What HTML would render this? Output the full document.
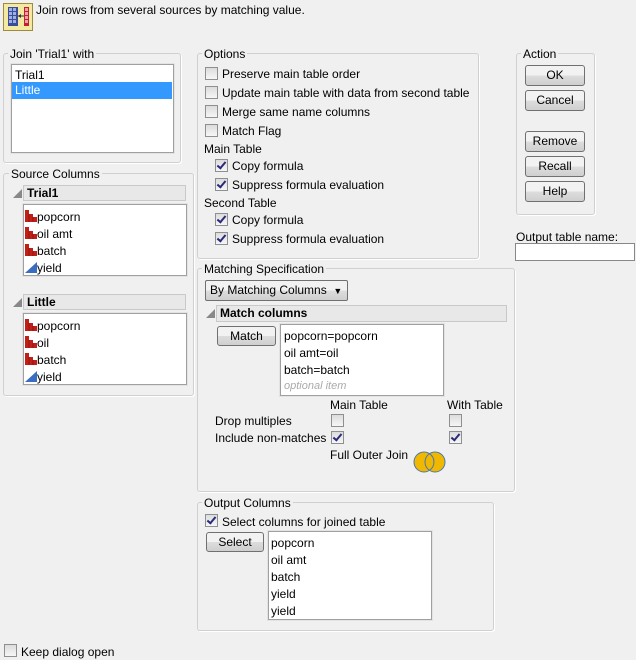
<!DOCTYPE html><html><head><style>
body{margin:0;width:636px;height:660px;background:#f0f0f0;font-family:"Liberation Sans",sans-serif;font-size:12px;color:#000;position:relative;overflow:hidden}
.a{position:absolute;white-space:nowrap}
.g{position:absolute;border:1px solid #d0d0d0;border-radius:3px;box-shadow:1px 1px 0 #fff}
.gl{position:absolute;background:#f0f0f0;padding:0 2px;white-space:nowrap}
.lb{position:absolute;background:#fff;border:1px solid #a0a0a0;box-shadow:0 0 0 1px #e3e3e3}
.cb{position:absolute;width:11px;height:11px;border:1px solid #8e8f8f;background:linear-gradient(#dcdcdc,#f6f6f6);box-sizing:content-box}
.cb.k::after{content:"";position:absolute;left:3px;top:0px;width:3px;height:7px;border:solid #2a2a7a;border-width:0 2px 2px 0;transform:rotate(40deg)}
.bt{position:absolute;border:1px solid #707070;border-radius:3px;background:linear-gradient(#f2f2f2 50%,#dddddd 50%,#cfcfcf);text-align:center;box-sizing:border-box;line-height:18px}
.hd{position:absolute;background:#e8e8e8;border:1px solid #c9c9c9;font-weight:bold;padding-left:3px;box-sizing:border-box;line-height:14px}
.tri{position:absolute;width:0;height:0;border-left:9px solid transparent;border-bottom:9px solid #888}
.ic{display:inline-block;vertical-align:-1px;margin-right:0}
</style></head><body>
<div class="a" style="left:3px;top:3px;width:30px;height:28px;background:#f3e9a0;border:1px solid #a08a3c;box-sizing:border-box">
<svg width="28" height="26" viewBox="0 0 28 26"><rect x="4" y="3" width="10" height="19" fill="#3a4d9c"/><g fill="#9fb0e0"><rect x="5" y="4" width="3" height="3"/><rect x="9" y="4" width="3" height="3"/><rect x="5" y="8" width="3" height="3"/><rect x="9" y="8" width="3" height="3"/><rect x="5" y="12" width="3" height="3"/><rect x="9" y="12" width="3" height="3"/><rect x="5" y="16" width="3" height="3"/><rect x="9" y="16" width="3" height="3"/></g><rect x="20" y="3" width="5" height="19" fill="#c02030"/><g fill="#f0a0a8"><rect x="21" y="4" width="3" height="3"/><rect x="21" y="8" width="3" height="3"/><rect x="21" y="12" width="3" height="3"/><rect x="21" y="16" width="3" height="3"/></g><path d="M14 12h6" stroke="#333"/><path d="M14 12l3-2v4z" fill="#333"/></svg></div>
<div class="a" style="left:36px;top:3px">Join rows from several sources by matching value.</div>

<div class="g" style="left:3px;top:53px;width:176px;height:108px"></div>
<div class="gl" style="left:8px;top:47px">Join 'Trial1' with</div>
<div class="lb" style="left:11px;top:64px;width:161px;height:87px"></div>
<div class="a" style="left:15px;top:68px">Trial1</div>
<div class="a" style="left:12px;top:82px;width:160px;height:17px;background:#3399ff;color:#fff;padding-left:3px;box-sizing:border-box;line-height:17px">Little</div>

<div class="g" style="left:3px;top:173px;width:189px;height:221px"></div>
<div class="gl" style="left:9px;top:167px">Source Columns</div>
<div class="tri" style="left:13px;top:189px"></div>
<div class="hd" style="left:23px;top:185px;width:163px;height:16px">Trial1</div>
<div class="lb" style="left:23px;top:204px;width:162px;height:70px"></div>
<div class="tri" style="left:13px;top:298px"></div>
<div class="hd" style="left:23px;top:294px;width:163px;height:16px">Little</div>
<div class="lb" style="left:23px;top:313px;width:162px;height:70px"></div>

<div class="g" style="left:197px;top:53px;width:280px;height:204px"></div>
<div class="gl" style="left:202px;top:47px">Options</div>
<div class="cb" style="left:205px;top:67px"></div><div class="a" style="left:222px;top:67px">Preserve main table order</div>
<div class="cb" style="left:205px;top:86px"></div><div class="a" style="left:222px;top:86px">Update main table with data from second table</div>
<div class="cb" style="left:205px;top:105px"></div><div class="a" style="left:222px;top:105px">Merge same name columns</div>
<div class="cb" style="left:205px;top:124px"></div><div class="a" style="left:222px;top:124px">Match Flag</div>
<div class="a" style="left:204px;top:142px">Main Table</div>
<div class="cb k" style="left:215px;top:159px"></div><div class="a" style="left:232px;top:159px">Copy formula</div>
<div class="cb k" style="left:215px;top:178px"></div><div class="a" style="left:232px;top:178px">Suppress formula evaluation</div>
<div class="a" style="left:204px;top:196px">Second Table</div>
<div class="cb k" style="left:215px;top:213px"></div><div class="a" style="left:232px;top:213px">Copy formula</div>
<div class="cb k" style="left:215px;top:232px"></div><div class="a" style="left:232px;top:232px">Suppress formula evaluation</div>

<div class="g" style="left:516px;top:53px;width:77px;height:160px"></div>
<div class="gl" style="left:521px;top:47px">Action</div>
<div class="bt" style="left:525px;top:65px;width:60px;height:21px">OK</div>
<div class="bt" style="left:525px;top:90px;width:60px;height:21px">Cancel</div>
<div class="bt" style="left:525px;top:131px;width:60px;height:21px">Remove</div>
<div class="bt" style="left:525px;top:156px;width:60px;height:21px">Recall</div>
<div class="bt" style="left:525px;top:181px;width:60px;height:21px">Help</div>
<div class="a" style="left:516px;top:230px">Output table name:</div>
<div class="a" style="left:515px;top:243px;width:120px;height:18px;background:#fff;border:1px solid #888;box-sizing:border-box"></div>

<div class="g" style="left:197px;top:268px;width:316px;height:222px"></div>
<div class="gl" style="left:202px;top:262px">Matching Specification</div>
<div class="bt" style="left:205px;top:280px;width:143px;height:21px;text-align:left;padding-left:4px;border-radius:2px">By Matching Columns &nbsp;<span style="font-size:9px">▼</span></div>
<div class="tri" style="left:206px;top:309px"></div>
<div class="hd" style="left:216px;top:305px;width:291px;height:17px">Match columns</div>
<div class="bt" style="left:217px;top:326px;width:59px;height:20px">Match</div>
<div class="lb" style="left:280px;top:324px;width:162px;height:70px"></div>
<div class="a" style="left:284px;top:329px">popcorn=popcorn</div>
<div class="a" style="left:284px;top:346px">oil amt=oil</div>
<div class="a" style="left:284px;top:363px">batch=batch</div>
<div class="a" style="left:284px;top:380px;color:#aaa;font-style:italic;font-size:11px">optional item</div>
<div class="a" style="left:330px;top:398px">Main Table</div>
<div class="a" style="left:447px;top:398px">With Table</div>
<div class="a" style="left:215px;top:414px">Drop multiples</div>
<div class="cb" style="left:331px;top:414px"></div><div class="cb" style="left:449px;top:414px"></div>
<div class="a" style="left:215px;top:431px">Include non-matches</div>
<div class="cb k" style="left:331px;top:431px"></div><div class="cb k" style="left:449px;top:431px"></div>
<div class="a" style="left:330px;top:448px">Full Outer Join</div>
<svg class="a" style="left:413px;top:450px" width="34" height="24"><circle cx="11" cy="12" r="10" fill="#f0b800" stroke="#4a78b0"/><circle cx="22" cy="12" r="10" fill="#f0b800" stroke="#4a78b0"/><path d="M16.5 3.7A10 10 0 0 1 16.5 20.3" fill="none" stroke="#4a78b0"/></svg>

<div class="g" style="left:197px;top:502px;width:295px;height:127px"></div>
<div class="gl" style="left:202px;top:496px">Output Columns</div>
<div class="cb k" style="left:205px;top:514px"></div><div class="a" style="left:222px;top:515px">Select columns for joined table</div>
<div class="bt" style="left:206px;top:532px;width:58px;height:20px">Select</div>
<div class="lb" style="left:268px;top:531px;width:162px;height:87px"></div>
<div class="a" style="left:271px;top:536px">popcorn</div>
<div class="a" style="left:271px;top:553px">oil amt</div>
<div class="a" style="left:271px;top:570px">batch</div>
<div class="a" style="left:271px;top:587px">yield</div>
<div class="a" style="left:271px;top:604px">yield</div>

<div class="cb" style="left:4px;top:644px"></div><div class="a" style="left:21px;top:645px">Keep dialog open</div>

<svg width="0" height="0" style="position:absolute"><defs>
<g id="bar"><rect x="0" y="0" width="4" height="12" fill="#c02018"/><rect x="4" y="4" width="4" height="8" fill="#c02018"/><rect x="8" y="7" width="4" height="5" fill="#c02018"/><path d="M4 4v8M8 7v5" stroke="#7a1010" stroke-width=".6"/></g>
<g id="tri2"><path d="M0 12L12 1V12Z" fill="#3a6cc0"/></g></defs></svg>
<div class="a" style="left:25px;top:209px;line-height:17px">
<div><svg class="ic" width="12" height="12"><use href="#bar"/></svg>popcorn</div>
<div><svg class="ic" width="12" height="12"><use href="#bar"/></svg>oil amt</div>
<div><svg class="ic" width="12" height="12"><use href="#bar"/></svg>batch</div>
<div><svg class="ic" width="12" height="12"><use href="#tri2"/></svg>yield</div></div>
<div class="a" style="left:25px;top:318px;line-height:17px">
<div><svg class="ic" width="12" height="12"><use href="#bar"/></svg>popcorn</div>
<div><svg class="ic" width="12" height="12"><use href="#bar"/></svg>oil</div>
<div><svg class="ic" width="12" height="12"><use href="#bar"/></svg>batch</div>
<div><svg class="ic" width="12" height="12"><use href="#tri2"/></svg>yield</div></div>
</body></html>
